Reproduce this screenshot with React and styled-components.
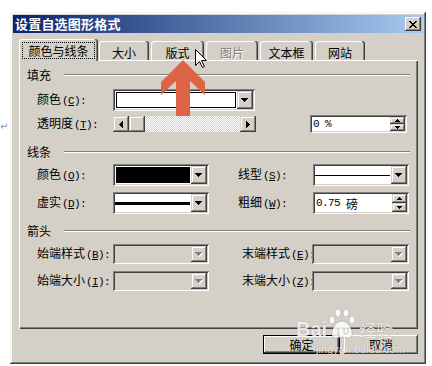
import React from "react";
import styled, { createGlobalStyle, css } from "styled-components";

const FACE = "#D4D0C8";

const raised = css`
  box-shadow: inset -1px -1px #404040, inset 1px 1px #fff, inset -2px -2px #808080;
`;
const bevel = css`
  box-shadow: inset -1px -1px #404040, inset 1px 1px ${FACE}, inset -2px -2px #808080,
    inset 2px 2px #fff;
`;
const sunken = css`
  box-shadow: inset 1px 1px #808080, inset -1px -1px #fff, inset 2px 2px #404040,
    inset -2px -2px ${FACE};
`;

const GlobalStyle = createGlobalStyle`
  html, body { margin: 0; padding: 0; background: #fff; }
  body {
    font-family: "Noto Sans CJK SC", "Noto Sans", sans-serif;
    font-size: 12px;
    color: #000;
  }
`;

const Page = styled.div`
  position: relative;
  width: 432px;
  height: 366px;
  box-sizing: border-box;
  padding-top: 12px;
  display: flex;
  align-items: flex-start;
  background: #fff;
  overflow: hidden;
`;

const Gutter = styled.div`
  width: 10px;
  padding-top: 110px;
  font: 10px/10px "DejaVu Sans", sans-serif;
  color: #7d95c4;
`;

const Dialog = styled.div`
  width: 416px;
  height: 352px;
  box-sizing: border-box;
  padding: 3px;
  background: ${FACE};
  box-shadow: inset -1px -1px #404040, inset 1px 1px #f4f2ee, inset -2px -2px #808080,
    inset 2px 2px #fff;
  display: flex;
  flex-direction: column;
`;

const TitleBar = styled.div`
  height: 18px;
  display: flex;
  align-items: center;
  justify-content: space-between;
  padding: 0 2px;
  background: linear-gradient(to right, #0a246a, #a6caf0);
`;

const Title = styled.span`
  color: #fff;
  font-weight: bold;
  font-size: 13px;
  line-height: 18px;
  letter-spacing: 0.2px;
`;

const CloseBtn = styled.div`
  width: 16px;
  height: 14px;
  background: ${FACE};
  ${raised}
  display: flex;
  align-items: center;
  justify-content: center;
  padding-right: 1px;
  box-sizing: border-box;
`;

const TabRow = styled.div`
  display: flex;
  align-items: flex-end;
  height: 21px;
  margin-top: 6px;
  padding-left: 6px;
  position: relative;
  z-index: 1;
`;

const Tab = styled.div`
  box-sizing: border-box;
  width: ${(p) => p.$w}px;
  height: ${(p) => (p.$active ? 22 : 19)}px;
  margin-left: ${(p) => p.$ml}px;
  margin-right: ${(p) => (p.$active ? -1 : 0)}px;
  margin-bottom: ${(p) => (p.$active ? -1 : 0)}px;
  padding-top: ${(p) => (p.$active ? 3 : 5)}px;
  display: flex;
  justify-content: center;
  align-items: flex-start;
  background: ${FACE};
  border-radius: 3px 3px 0 0;
  box-shadow: inset -1px 0 #404040, inset -2px 0 #808080, inset 1px 1px #fff;
  color: ${(p) => (p.$disabled ? "#808080" : "#000")};
  text-shadow: ${(p) => (p.$disabled ? "1px 1px #fff" : "none")};
  line-height: 13px;
  white-space: nowrap;
`;

const TabLabel = styled.span`
  line-height: 13px;
  ${(p) =>
    p.$focus &&
    css`
      border: 1px dotted #000;
      padding: 1px 5px;
    `}
`;

const Panel = styled.div`
  box-sizing: border-box;
  margin-left: 6px;
  width: 399px;
  height: 269px;
  padding: 8px 8px 0 8px;
  background: ${FACE};
  box-shadow: inset 1px 1px #fff, inset -1px -1px #404040, inset -2px -2px #808080;
  display: flex;
  flex-direction: column;
`;

const SectionHead = styled.div`
  display: flex;
  align-items: center;
  height: 14px;
  line-height: 14px;
  margin-top: ${(p) => p.$mt || 0}px;
`;

const Groove = styled.div`
  flex: 1;
  margin-left: 13px;
  height: 0;
  border-top: 1px solid #808080;
  border-bottom: 1px solid #fff;
`;

const FormGrid = styled.div`
  display: grid;
  grid-template-columns: ${(p) => p.$cols};
  grid-template-rows: ${(p) => p.$rows};
  row-gap: ${(p) => p.$gap}px;
  margin-top: ${(p) => p.$mt}px;
  padding-left: 10px;
  align-items: center;
`;

const Label = styled.span`
  white-space: nowrap;
  line-height: 14px;
`;

const Key = styled.span`
  font-family: "Liberation Mono", monospace;
  font-size: 11px;
  letter-spacing: -0.6px;
  margin-left: 1px;
`;

const Field = styled.div`
  box-sizing: border-box;
  width: ${(p) => p.$w}px;
  align-self: stretch;
  padding: 2px;
  background: ${(p) => (p.$disabled ? FACE : "#fff")};
  ${sunken}
  display: flex;
  ${(p) =>
    p.$span &&
    css`
      grid-column: span ${p.$span};
    `}
`;

const Swatch = styled.div`
  flex: 1;
  margin: 1px;
  border: 1px solid #000;
  background: ${(p) => p.$color};
`;

const LineSample = styled.div`
  flex: 1;
  display: flex;
  align-items: center;
  padding: 0 1px 0 0;
`;

const Stroke = styled.div`
  flex: 1;
  height: ${(p) => p.$t}px;
  background: #000;
`;

const SmallBtn = styled.div`
  box-sizing: border-box;
  width: ${(p) => p.$w || 16}px;
  flex: ${(p) => (p.$grow ? 1 : "none")};
  background: ${FACE};
  ${bevel}
  display: flex;
  align-items: center;
  justify-content: center;
`;

const ScrollBar = styled.div`
  display: flex;
  width: 143px;
  height: 16px;
`;

const Track = styled.div`
  flex: 1;
  background: repeating-conic-gradient(#fff 0% 25%, ${FACE} 0% 50%) 0 0 / 2px 2px;
`;

const SpinBox = styled.div`
  box-sizing: border-box;
  width: ${(p) => p.$w}px;
  align-self: stretch;
  padding: 2px;
  background: #fff;
  ${sunken}
  display: flex;
`;

const SpinText = styled.div`
  flex: 1;
  display: flex;
  align-items: center;
  padding-left: 1px;
  font-family: "Liberation Mono", monospace;
  font-size: 11px;
  letter-spacing: -0.6px;
  white-space: pre;
`;

const Cjk = styled.span`
  font-family: "Noto Sans CJK SC", sans-serif;
  font-size: 12px;
  letter-spacing: 0;
`;

const SpinBtns = styled.div`
  width: 15px;
  display: flex;
  flex-direction: column;
`;

const ButtonRow = styled.div`
  display: flex;
  justify-content: flex-end;
  gap: 4px;
  margin-top: 6px;
  padding-right: 5px;
`;

const PushButton = styled.div`
  box-sizing: border-box;
  width: ${(p) => p.$w}px;
  height: 19px;
  display: flex;
  align-items: center;
  justify-content: center;
  background: ${FACE};
  line-height: 13px;
  ${raised}
  ${(p) =>
    p.$default &&
    css`
      border: 1px solid #000;
    `}
`;

const Overlay = styled.svg`
  position: absolute;
  left: ${(p) => p.$x}px;
  top: ${(p) => p.$y}px;
  z-index: 5;
  overflow: visible;
`;

const Watermark = styled.div`
  position: absolute;
  left: 296px;
  top: 304px;
  z-index: 4;
  display: flex;
  flex-direction: column;
  color: rgba(255, 255, 255, 0.85);
  text-shadow: 0 0 1px rgba(0, 0, 0, 0.35);
  pointer-events: none;
`;

const WmRow = styled.div`
  display: flex;
  align-items: flex-end;
  height: 36px;
`;

const WmBai = styled.span`
  font: bold 20px/20px "Liberation Sans", sans-serif;
  margin-bottom: 1px;
`;

const WmJy = styled.span`
  font: 17px/18px "Noto Sans CJK SC", sans-serif;
  margin-left: 2px;
  margin-bottom: 1px;
`;

const WmUrl = styled.span`
  font: 11px/12px "Liberation Sans", sans-serif;
  margin-left: 20px;
  margin-top: 3px;
`;

const DownArrow = ({ disabled }) => (
  <svg width="8" height="5" viewBox="0 0 8 5">
    {disabled && (
      <path d="M1 1h7v1H1zM2 2h5v1H2zM3 3h3v1H3zM4 4h1v1H4z" fill="#fff" />
    )}
    <path
      d="M0 0h7v1H0zM1 1h5v1H1zM2 2h3v1H2zM3 3h1v1H3z"
      fill={disabled ? "#808080" : "#000"}
    />
  </svg>
);

const LeftArrow = () => (
  <svg width="4" height="7" viewBox="0 0 4 7">
    <path d="M3 0h1v7H3zM2 1h1v5H2zM1 2h1v3H1zM0 3h1v1H0z" fill="#000" />
  </svg>
);

const RightArrow = () => (
  <svg width="4" height="7" viewBox="0 0 4 7">
    <path d="M0 0h1v7H0zM1 1h1v5H1zM2 2h1v3H2zM3 3h1v1H3z" fill="#000" />
  </svg>
);

const UpTiny = () => (
  <svg width="5" height="3" viewBox="0 0 5 3">
    <path d="M2 0h1v1H2zM1 1h3v1H1zM0 2h5v1H0z" fill="#000" />
  </svg>
);

const DownTiny = () => (
  <svg width="5" height="3" viewBox="0 0 5 3">
    <path d="M0 0h5v1H0zM1 1h3v1H1zM2 2h1v1H2z" fill="#000" />
  </svg>
);

const CloseGlyph = () => (
  <svg width="8" height="7" viewBox="0 0 8 7">
    <path
      d="M0 0h2v1H0zM6 0h2v1H6zM1 1h2v1H1zM5 1h2v1H5zM2 2h4v1H2zM3 3h2v1H3zM2 4h4v1H2zM1 5h2v1H1zM5 5h2v1H5zM0 6h2v1H0zM6 6h2v1H6z"
      fill="#000"
    />
  </svg>
);

const Combo = ({ w, span, disabled, children }) => (
  <Field $w={w} $span={span} $disabled={disabled}>
    {children || <LineSample />}
    <SmallBtn>
      <DownArrow disabled={disabled} />
    </SmallBtn>
  </Field>
);

const Spinner = ({ w, value }) => (
  <SpinBox $w={w}>
    <SpinText>{value}</SpinText>
    <SpinBtns>
      <SmallBtn $w={15} $grow>
        <UpTiny />
      </SmallBtn>
      <SmallBtn $w={15} $grow>
        <DownTiny />
      </SmallBtn>
    </SpinBtns>
  </SpinBox>
);

const L = ({ text, k }) => (
  <Label>
    {text}
    <Key>
      (<u>{k}</u>):
    </Key>
  </Label>
);

const tabs = [
  { t: "颜色与线条", w: 79, ml: 0, active: true },
  { t: "大小", w: 50, ml: 2 },
  { t: "版式", w: 53, ml: 2 },
  { t: "图片", w: 52, ml: 2, disabled: true },
  { t: "文本框", w: 53, ml: 2 },
  { t: "网站", w: 50, ml: 2 },
];

export default function App() {
  return (
    <>
      <GlobalStyle />
      <Page>
        <Gutter>↵</Gutter>
        <Dialog>
          <TitleBar>
            <Title>设置自选图形格式</Title>
            <CloseBtn>
              <CloseGlyph />
            </CloseBtn>
          </TitleBar>

          <TabRow>
            {tabs.map((tb) => (
              <Tab
                key={tb.t}
                $w={tb.w}
                $ml={tb.ml}
                $active={tb.active}
                $disabled={tb.disabled}
              >
                <TabLabel $focus={tb.active}>{tb.t}</TabLabel>
              </Tab>
            ))}
          </TabRow>

          <Panel>
            <SectionHead>
              填充
              <Groove />
            </SectionHead>
            <FormGrid $cols="76px 143px 54px 97px" $rows="22px 18px" $gap={4} $mt={7}>
              <L text="颜色" k="C" />
              <Combo w={142} span={3}>
                <Swatch $color="#fff" />
              </Combo>
              <L text="透明度" k="T" />
              <ScrollBar>
                <SmallBtn>
                  <LeftArrow />
                </SmallBtn>
                <SmallBtn />
                <Track />
                <SmallBtn>
                  <RightArrow />
                </SmallBtn>
              </ScrollBar>
              <span />
              <Spinner w={97} value="0 %" />
            </FormGrid>

            <SectionHead $mt={12}>
              线条
              <Groove />
            </SectionHead>
            <FormGrid
              $cols="76px 96px 29px 75px 96px"
              $rows="22px 22px"
              $gap={6}
              $mt={5}
            >
              <L text="颜色" k="O" />
              <Combo w={96}>
                <Swatch $color="#000" />
              </Combo>
              <span />
              <L text="线型" k="S" />
              <Combo w={96}>
                <LineSample>
                  <Stroke $t={1} />
                </LineSample>
              </Combo>
              <L text="虚实" k="D" />
              <Combo w={96}>
                <LineSample>
                  <Stroke $t={3} />
                </LineSample>
              </Combo>
              <span />
              <L text="粗细" k="W" />
              <Spinner
                w={96}
                value={
                  <>
                    0.75 <Cjk>磅</Cjk>
                  </>
                }
              />
            </FormGrid>

            <SectionHead $mt={10}>
              箭头
              <Groove />
            </SectionHead>
            <FormGrid
              $cols="76px 96px 33px 70px 97px"
              $rows="20px 20px"
              $gap={7}
              $mt={6}
            >
              <L text="始端样式" k="B" />
              <Combo w={96} disabled />
              <span />
              <L text="末端样式" k="E" />
              <Combo w={97} disabled />
              <L text="始端大小" k="I" />
              <Combo w={96} disabled />
              <span />
              <L text="末端大小" k="Z" />
              <Combo w={97} disabled />
            </FormGrid>
          </Panel>

          <ButtonRow>
            <PushButton $w={77} $default>
              确定
            </PushButton>
            <PushButton $w={74}>取消</PushButton>
          </ButtonRow>
        </Dialog>

        <Overlay $x={161} $y={60} width="45" height="57" viewBox="0 0 45 57">
          <polygon
            points="22,0 44,22 44,35 29,21 29,56 15,56 15,21 0,35 0,22"
            fill="#DE6448"
          />
        </Overlay>

        <Overlay $x={195} $y={49} width="13" height="20" viewBox="0 0 13 20">
          <path
            d="M0.5 0.5 L0.5 16.5 L4.5 12.5 L7.5 18.5 L9.5 17.5 L6.5 11.5 L11.5 11.5 Z"
            fill="#fff"
            stroke="#000"
            strokeWidth="1"
          />
        </Overlay>

        <Watermark>
          <WmRow>
            <WmBai>Bai</WmBai>
            <svg width="30" height="34" viewBox="0 0 30 34">
              <g fill="rgba(255,255,255,0.85)" stroke="rgba(120,120,120,0.35)">
                <ellipse cx="5" cy="14" rx="3" ry="4" />
                <ellipse cx="11" cy="7" rx="3" ry="4" />
                <ellipse cx="19" cy="7" rx="3" ry="4" />
                <ellipse cx="25" cy="14" rx="3" ry="4" />
                <path d="M15 15 C9 15 4 24 5 29 C6 33 11 32 15 31 C19 32 24 33 25 29 C26 24 21 15 15 15 Z" />
              </g>
              <path
                d="M11 22v6h2M17 22v5c0 1 1 1 2 1s2 0 2-1v-5"
                stroke="rgba(160,160,160,0.6)"
                fill="none"
              />
            </svg>
            <WmJy>经验</WmJy>
          </WmRow>
          <WmUrl>jingyan.baidu.com</WmUrl>
        </Watermark>
      </Page>
    </>
  );
}
